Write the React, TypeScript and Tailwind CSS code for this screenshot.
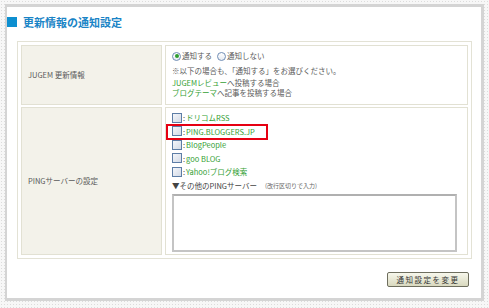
import type { ReactNode } from 'react';

const FONT = "font-['Noto_Sans_CJK_JP','Noto_Sans',sans-serif]";

function Radio({ checked }: { checked?: boolean }) {
  return (
    <span className="inline-flex w-[9px] h-[9px] rounded-full border border-[#6f8db5] bg-gradient-to-b from-white to-[#e6ebf2] items-center justify-center mr-[1px] align-middle">
      {checked && <span className="w-[4px] h-[4px] rounded-full bg-[#2e9d2e]" />}
    </span>
  );
}

function Check() {
  return (
    <span className="inline-block w-[10px] h-[10px] border border-[#5d7da6] bg-gradient-to-br from-[#f4f6fa] to-[#d3dae6] align-middle" />
  );
}

function PingItem({ children, marked }: { children: ReactNode; marked?: boolean }) {
  return (
    <div className="relative flex items-center h-[13.5px]">
      <Check />
      <span className="text-[#444] mx-[1px]">:</span>
      <span className="text-[#34a034]">{children}</span>
      {marked && (
        <span className="absolute left-[-6px] top-[-1px] w-[102px] h-[16px] border-2 border-[#e60012]" />
      )}
    </div>
  );
}

export default function App() {
  return (
    <div
      className={`w-[489px] h-[308px] pt-[4px] pl-[5px] bg-[#f7f7f7] bg-[radial-gradient(#dcdcdc_0.8px,transparent_0.8px)] bg-[length:3px_3px] ${FONT}`}
    >
      <div className="w-[479px] h-[297px] bg-white border-[3px] border-l-2 border-[#d4d4d4] flex flex-col">
        <div className="flex items-center mt-[10px] h-[10px]">
          <span className="w-[10px] h-[10px] bg-[#0d8fd0]" />
          <span className="ml-[6px] text-[11px] font-bold text-[#1a84c6] leading-none">
            更新情報の通知設定
          </span>
        </div>

        <div className="ml-[10px] mt-[14px] w-[455px] grid grid-cols-[141px_303px] grid-rows-[60px_148px] gap-x-[3px] gap-y-[2px] p-[3px] border border-[#e3e2d5] text-[7.5px] text-[#5a5a5a]">
          <div className="bg-[#f3f2ea] border border-[#e2e1d3] flex items-center pl-[6px]">
            JUGEM 更新情報
          </div>
          <div className="bg-white border border-[#e2e1d3] pl-[6px] pt-[5px] leading-[10px]">
            <div className="flex items-center h-[10px]">
              <Radio checked />
              <span>通知する</span>
              <span className="ml-[5px]" />
              <Radio />
              <span>通知しない</span>
            </div>
            <div className="mt-[5px]">※以下の場合も、「通知する」をお選びください。</div>
            <div className="mt-[2px]">
              <span className="text-[#34a034]">JUGEMレビュー</span>へ投稿する場合
            </div>
            <div>
              <span className="text-[#34a034]">ブログテーマ</span>へ記事を投稿する場合
            </div>
          </div>

          <div className="bg-[#f3f2ea] border border-[#e2e1d3] flex items-center pl-[6px]">
            PINGサーバーの設定
          </div>
          <div className="bg-white border border-[#e2e1d3] pl-[6px] pt-[3px]">
            <PingItem>ドリコムRSS</PingItem>
            <PingItem marked>PING.BLOGGERS.JP</PingItem>
            <PingItem>BlogPeople</PingItem>
            <PingItem>goo BLOG</PingItem>
            <PingItem>Yahoo!ブログ検索</PingItem>
            <div className="flex items-center h-[14px] text-[#444]">
              ▼その他のPINGサーバー
              <span className="ml-[8px] text-[6px] text-[#666]">(改行区切りで入力)</span>
            </div>
            <div className="mt-[1px] w-[285px] h-[58px] border-2 border-[#c4c4c4] border-t-[#b0b0b0] bg-white" />
          </div>
        </div>

        <div className="flex justify-end mt-[13px] mr-[12px]">
          <button className="w-[82px] h-[15px] rounded-[2px] border border-[#6e6e5e] bg-gradient-to-b from-[#f7f7ec] to-[#d9d9bf] text-[7.5px] text-[#333] tracking-[1.5px] leading-none flex items-center justify-center">
            通知設定を変更
          </button>
        </div>
      </div>
    </div>
  );
}
